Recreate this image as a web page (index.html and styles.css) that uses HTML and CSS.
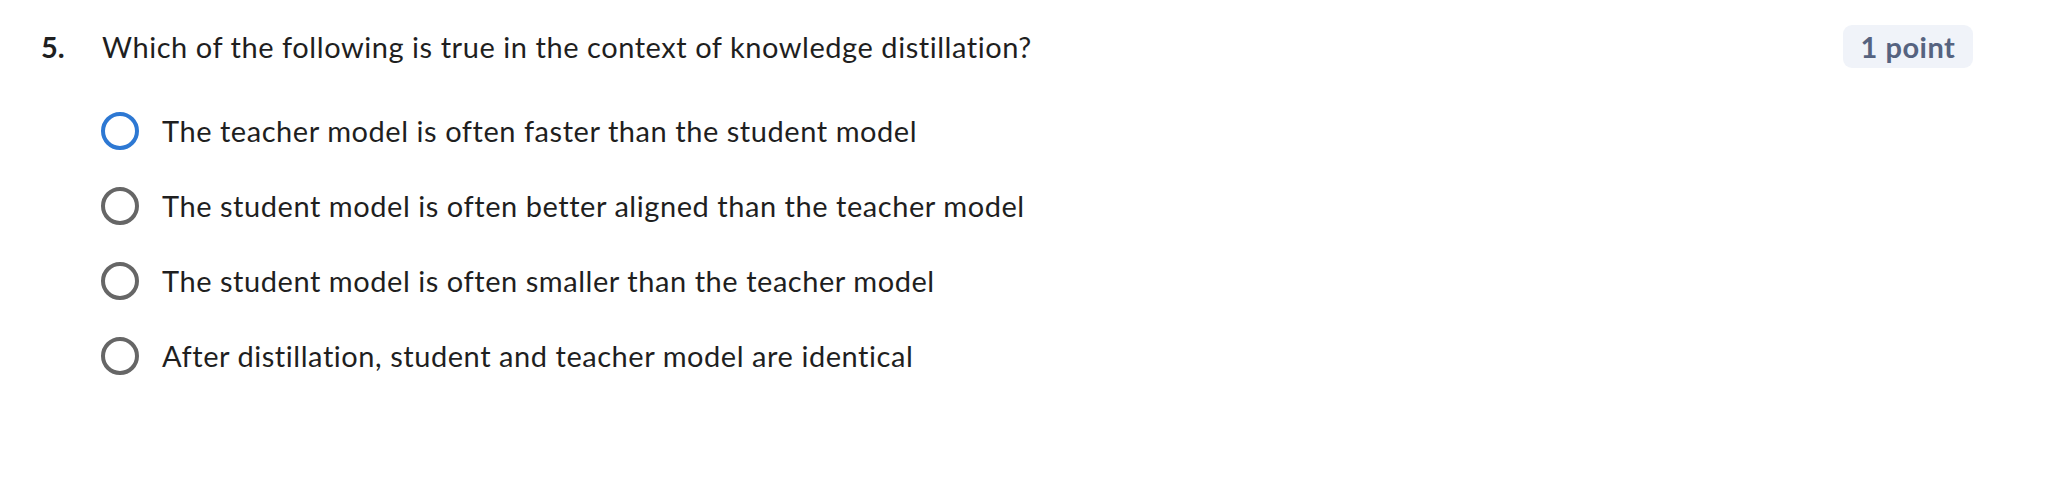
FILE: index.html
```html
<!DOCTYPE html>
<html lang="en">
<head>
<meta charset="utf-8">
<title>Quiz question</title>
<link rel="stylesheet" href="styles.css">
</head>
<body>
<div class="question">
  <div class="question-head">
    <span class="q-num">5.</span>
    <span class="q-text">Which of the following is true in the context of knowledge distillation?</span>
    <span class="points">1 point</span>
  </div>
  <div class="options">
    <label class="option"><span class="radio radio-focus"></span><span class="opt-text">The teacher model is often faster than the student model</span></label>
    <label class="option"><span class="radio"></span><span class="opt-text">The student model is often better aligned than the teacher model</span></label>
    <label class="option"><span class="radio"></span><span class="opt-text">The student model is often smaller than the teacher model</span></label>
    <label class="option"><span class="radio"></span><span class="opt-text">After distillation, student and teacher model are identical</span></label>
  </div>
</div>
</body>
</html>
```

FILE: styles.css
```css
html, body {
  margin: 0;
  padding: 0;
  background: #ffffff;
}
body {
  font-family: "Lato", "Noto Sans", sans-serif;
  font-variant-ligatures: none;
  color: #1f1f1f;
  width: 2066px;
  height: 486px;
  overflow: hidden;
}
.question {
  padding: 25px 93px 0 41px;
}
.question-head {
  display: flex;
  align-items: center;
  height: 43px;
}
.q-num {
  width: 61px;
  flex: none;
  font-size: 29px;
  font-weight: 700;
}
.q-text {
  font-size: 29px;
  letter-spacing: 0.55px;
  flex: 1;
}
.points {
  flex: none;
  width: 130px;
  height: 43px;
  box-sizing: border-box;
  display: flex;
  align-items: center;
  justify-content: center;
  background: #f0f3f9;
  border-radius: 9px;
  color: #566380;
  font-size: 29px;
  letter-spacing: 0.5px;
  font-weight: 700;
}
.options {
  display: flex;
  flex-direction: column;
  margin-top: 25px;
  padding-left: 60px;
}
.option {
  display: flex;
  align-items: center;
  height: 75px;
  gap: 23px;
}
.radio {
  flex: none;
  width: 38px;
  height: 38px;
  box-sizing: border-box;
  border: 4px solid #666666;
  border-radius: 50%;
}
.radio-focus {
  border-color: #2d78d3;
}
.opt-text {
  font-size: 29px;
  letter-spacing: 0.55px;
}
```
